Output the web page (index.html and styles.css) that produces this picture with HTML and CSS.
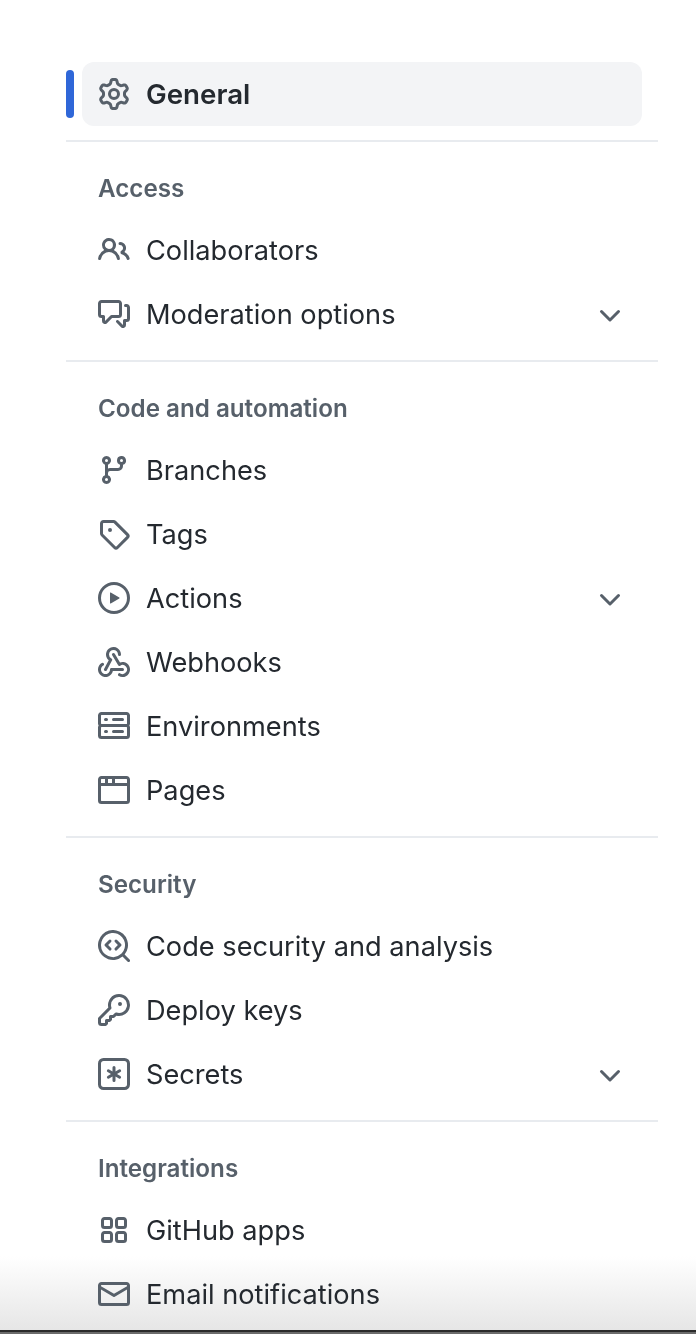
FILE: index.html
```html
<!DOCTYPE html>
<html lang="en">
<head>
<meta charset="utf-8">
<title>Settings</title>
<link rel="stylesheet" href="styles.css">
</head>
<body>
<nav class="nav">
  <a class="row active"><svg class="icon" viewBox="0 0 16 16"><path d="M8 0a8.2 8.2 0 0 1 .701.031C9.444.095 9.99.645 10.16 1.29l.288 1.107c.018.066.079.158.212.224.231.114.454.243.668.386.123.082.233.09.299.071l1.103-.303c.644-.176 1.392.021 1.82.63.27.385.506.792.704 1.218.315.675.111 1.422-.364 1.891l-.814.806c-.049.048-.098.147-.088.294.016.257.016.515 0 .772-.01.147.038.246.088.294l.814.806c.475.469.679 1.216.364 1.891a7.977 7.977 0 0 1-.704 1.217c-.428.61-1.176.807-1.82.63l-1.102-.302c-.067-.019-.177-.011-.3.071a5.909 5.909 0 0 1-.668.386c-.133.066-.194.158-.211.224l-.29 1.106c-.168.646-.715 1.196-1.458 1.26a8.006 8.006 0 0 1-1.402 0c-.743-.064-1.289-.614-1.458-1.26l-.289-1.106c-.018-.066-.079-.158-.212-.224a5.738 5.738 0 0 1-.668-.386c-.123-.082-.233-.09-.299-.071l-1.103.303c-.644.176-1.392-.021-1.82-.63a8.12 8.12 0 0 1-.704-1.218c-.315-.675-.111-1.422.363-1.891l.815-.806c.05-.048.098-.147.088-.294a6.214 6.214 0 0 1 0-.772c.01-.147-.038-.246-.088-.294l-.815-.806C.635 6.045.431 5.298.746 4.623a7.92 7.92 0 0 1 .704-1.217c.428-.61 1.176-.807 1.82-.63l1.102.302c.067.019.177.011.3-.071.214-.143.437-.272.668-.386.133-.066.194-.158.211-.224l.29-1.106C6.009.645 6.556.095 7.299.03 7.53.01 7.764 0 8 0Zm-.571 1.525c-.036.003-.108.036-.137.146l-.289 1.105c-.147.561-.549.967-.998 1.189-.173.086-.34.183-.5.29-.417.278-.97.423-1.529.27l-1.103-.303c-.109-.03-.175.016-.195.045-.22.312-.412.644-.573.99-.014.031-.021.11.059.19l.815.806c.411.406.562.957.53 1.456a4.709 4.709 0 0 0 0 .582c.032.499-.119 1.05-.53 1.456l-.815.806c-.081.08-.073.159-.059.19.162.346.353.677.573.989.02.03.085.076.195.046l1.102-.303c.56-.153 1.113-.008 1.53.27.161.107.328.204.501.29.447.222.85.629.997 1.189l.289 1.105c.029.109.101.143.137.146a6.6 6.6 0 0 0 1.142 0c.036-.003.108-.036.137-.146l.289-1.105c.147-.561.549-.967.998-1.189.173-.086.34-.183.5-.29.417-.278.97-.423 1.529-.27l1.103.303c.109.029.175-.016.195-.045.22-.313.411-.644.573-.99.014-.031.021-.11-.059-.19l-.815-.806c-.411-.406-.562-.957-.53-1.456a4.709 4.709 0 0 0 0-.582c-.032-.499.119-1.05.53-1.456l.815-.806c.081-.08.073-.159.059-.19a6.464 6.464 0 0 0-.573-.989c-.02-.03-.085-.076-.195-.046l-1.102.303c-.56.153-1.113.008-1.53-.27a4.44 4.44 0 0 0-.501-.29c-.447-.222-.85-.629-.997-1.189l-.289-1.105c-.029-.11-.101-.143-.137-.146a6.6 6.6 0 0 0-1.142 0ZM11 8a3 3 0 1 1-6 0 3 3 0 0 1 6 0ZM9.5 8a1.5 1.5 0 1 0-3.001.001A1.5 1.5 0 0 0 9.5 8Z"/></svg><span class="label">General</span></a>
  <div class="group">
    <h2 class="heading">Access</h2>
    <a class="row"><svg class="icon" viewBox="0 0 16 16"><path d="M2 5.5a3.5 3.5 0 1 1 5.898 2.549 5.508 5.508 0 0 1 3.034 4.084.75.75 0 1 1-1.482.235 4 4 0 0 0-7.9 0 .75.75 0 0 1-1.482-.236A5.507 5.507 0 0 1 3.102 8.05 3.493 3.493 0 0 1 2 5.5ZM11 4a3.001 3.001 0 0 1 2.22 5.018 5.01 5.01 0 0 1 2.56 3.012.749.749 0 0 1-.885.954.752.752 0 0 1-.549-.514 3.507 3.507 0 0 0-2.522-2.372.75.75 0 0 1-.574-.73v-.352a.75.75 0 0 1 .416-.672A1.5 1.5 0 0 0 11 5.5.75.75 0 0 1 11 4Zm-5.5-.5a2 2 0 1 0-.001 3.999A2 2 0 0 0 5.5 3.5Z"/></svg><span class="label">Collaborators</span></a>
    <a class="row"><svg class="icon" viewBox="0 0 16 16"><path d="M1.75 1h8.5c.966 0 1.75.784 1.75 1.75v5.5A1.75 1.75 0 0 1 10.25 10H7.061l-2.574 2.573A1.458 1.458 0 0 1 2 11.543V10h-.25A1.75 1.75 0 0 1 0 8.25v-5.5C0 1.784.784 1 1.75 1ZM1.5 2.75v5.5c0 .138.112.25.25.25h1a.75.75 0 0 1 .75.75v2.19l2.72-2.72a.749.749 0 0 1 .53-.22h3.5a.25.25 0 0 0 .25-.25v-5.5a.25.25 0 0 0-.25-.25h-8.5a.25.25 0 0 0-.25.25Zm13 2a.25.25 0 0 0-.25-.25h-.5a.75.75 0 0 1 0-1.5h.5c.966 0 1.75.784 1.75 1.75v5.5A1.75 1.75 0 0 1 14.25 12H14v1.543a1.458 1.458 0 0 1-2.487 1.03L9.22 12.28a.749.749 0 0 1 .326-1.275.749.749 0 0 1 .734.215l2.22 2.22v-2.19a.75.75 0 0 1 .75-.75h1a.25.25 0 0 0 .25-.25Z"/></svg><span class="label">Moderation options</span><svg class="chevron" viewBox="0 0 16 16"><path d="M12.78 5.22a.749.749 0 0 1 0 1.06l-4.25 4.25a.749.749 0 0 1-1.06 0L3.22 6.28a.749.749 0 1 1 1.06-1.06L8 8.939l3.72-3.719a.749.749 0 0 1 1.06 0Z"/></svg></a>
  </div>
  <div class="group">
    <h2 class="heading">Code and automation</h2>
    <a class="row"><svg class="icon" viewBox="0 0 16 16"><path d="M9.5 3.25a2.25 2.25 0 1 1 3 2.122V6A2.5 2.5 0 0 1 10 8.5H6a1 1 0 0 0-1 1v1.128a2.251 2.251 0 1 1-1.5 0V5.372a2.25 2.25 0 1 1 1.5 0v1.836A2.493 2.493 0 0 1 6 7h4a1 1 0 0 0 1-1v-.628A2.25 2.25 0 0 1 9.5 3.25Zm-6 0a.75.75 0 1 0 1.5 0 .75.75 0 0 0-1.5 0Zm8.25-.75a.75.75 0 1 0 0 1.5.75.75 0 0 0 0-1.5ZM4.25 12a.75.75 0 1 0 0 1.5.75.75 0 0 0 0-1.5Z"/></svg><span class="label">Branches</span></a>
    <a class="row"><svg class="icon" viewBox="0 0 16 16"><path d="M1 7.775V2.75C1 1.784 1.784 1 2.75 1h5.025c.464 0 .91.184 1.238.513l6.25 6.25a1.75 1.75 0 0 1 0 2.474l-5.026 5.026a1.75 1.75 0 0 1-2.474 0l-6.25-6.25A1.752 1.752 0 0 1 1 7.775Zm1.5 0c0 .066.026.13.073.177l6.25 6.25a.25.25 0 0 0 .354 0l5.025-5.025a.25.25 0 0 0 0-.354l-6.25-6.25a.25.25 0 0 0-.177-.073H2.75a.25.25 0 0 0-.25.25ZM6 5a1 1 0 1 1 0 2 1 1 0 0 1 0-2Z"/></svg><span class="label">Tags</span></a>
    <a class="row"><svg class="icon" viewBox="0 0 16 16"><path d="M8 0a8 8 0 1 1 0 16A8 8 0 0 1 8 0ZM1.5 8a6.5 6.5 0 1 0 13 0 6.5 6.5 0 0 0-13 0Zm4.879-2.773 4.264 2.559a.25.25 0 0 1 0 .428l-4.264 2.559A.25.25 0 0 1 6 10.559V5.442a.25.25 0 0 1 .379-.215Z"/></svg><span class="label">Actions</span><svg class="chevron" viewBox="0 0 16 16"><path d="M12.78 5.22a.749.749 0 0 1 0 1.06l-4.25 4.25a.749.749 0 0 1-1.06 0L3.22 6.28a.749.749 0 1 1 1.06-1.06L8 8.939l3.72-3.719a.749.749 0 0 1 1.06 0Z"/></svg></a>
    <a class="row"><svg class="icon" viewBox="0 0 16 16"><path d="M5.5 4.25a2.25 2.25 0 0 1 4.5 0 .75.75 0 0 0 1.5 0 3.75 3.75 0 1 0-6.14 2.889l-2.272 4.258a.75.75 0 0 0 1.324.706L7 7.25a.75.75 0 0 0-.309-1.015A2.25 2.25 0 0 1 5.5 4.25Z"/><path d="M7.364 3.607a.75.75 0 0 1 1.03.257l2.608 4.349a3.75 3.75 0 1 1-.628 6.785.75.75 0 0 1 .752-1.299 2.25 2.25 0 1 0-.033-3.88.75.75 0 0 1-1.03-.256L7.107 4.636a.75.75 0 0 1 .257-1.03Z"/><path d="M2.9 8.776A.75.75 0 0 1 2.625 9.8 2.25 2.25 0 1 0 6 11.75a.75.75 0 0 1 .75-.751h5.5a.75.75 0 0 1 0 1.5H7.425a3.751 3.751 0 1 1-5.55-3.998.75.75 0 0 1 1.024.274Z"/></svg><span class="label">Webhooks</span></a>
    <a class="row"><svg class="icon" viewBox="0 0 16 16"><path d="M1.75 1h12.5c.966 0 1.75.784 1.75 1.75v4c0 .372-.116.717-.314 1 .198.283.314.628.314 1v4a1.75 1.75 0 0 1-1.75 1.75H1.75A1.75 1.75 0 0 1 0 12.75v-4c0-.358.109-.707.314-1A1.739 1.739 0 0 1 0 6.75v-4C0 1.784.784 1 1.75 1ZM1.5 2.75v4c0 .138.112.25.25.25h12.5a.25.25 0 0 0 .25-.25v-4a.25.25 0 0 0-.25-.25H1.75a.25.25 0 0 0-.25.25Zm.25 5.75a.25.25 0 0 0-.25.25v4c0 .138.112.25.25.25h12.5a.25.25 0 0 0 .25-.25v-4a.25.25 0 0 0-.25-.25ZM7 4.75A.75.75 0 0 1 7.75 4h4.5a.75.75 0 0 1 0 1.5h-4.5A.75.75 0 0 1 7 4.75ZM7.75 10h4.5a.75.75 0 0 1 0 1.5h-4.5a.75.75 0 0 1 0-1.5ZM3 4.75A.75.75 0 0 1 3.75 4h.5a.75.75 0 0 1 0 1.5h-.5A.75.75 0 0 1 3 4.75ZM3.75 10h.5a.75.75 0 0 1 0 1.5h-.5a.75.75 0 0 1 0-1.5Z"/></svg><span class="label">Environments</span></a>
    <a class="row"><svg class="icon" viewBox="0 0 16 16"><path d="M0 2.75C0 1.784.784 1 1.75 1h12.5c.966 0 1.75.784 1.75 1.75v10.5A1.75 1.75 0 0 1 14.25 15H1.75A1.75 1.75 0 0 1 0 13.25ZM14.5 6h-13v7.25c0 .138.112.25.25.25h12.5a.25.25 0 0 0 .25-.25Zm-6-3.5v2H14.5V2.75a.25.25 0 0 0-.25-.25ZM5 2.5v2h2v-2Zm-3.25 0a.25.25 0 0 0-.25.25V4.5h2v-2Z"/></svg><span class="label">Pages</span></a>
  </div>
  <div class="group">
    <h2 class="heading">Security</h2>
    <a class="row"><svg class="icon" viewBox="0 0 16 16"><path d="M8.47 4.97a.75.75 0 0 0 0 1.06L9.94 7.5 8.47 8.97a.75.75 0 1 0 1.06 1.06l2-2a.75.75 0 0 0 0-1.06l-2-2a.75.75 0 0 0-1.06 0ZM6.53 6.03a.75.75 0 0 0-1.06-1.06l-2 2a.75.75 0 0 0 0 1.06l2 2a.75.75 0 1 0 1.06-1.06L5.06 7.5l1.47-1.47Z"/><path d="M12.246 13.307a7.501 7.501 0 1 1 1.06-1.06l2.474 2.473a.749.749 0 0 1-.326 1.275.749.749 0 0 1-.734-.215ZM1.5 7.5a6.002 6.002 0 0 0 3.608 5.504 6.002 6.002 0 0 0 6.486-1.117.748.748 0 0 1 .292-.293A6 6 0 1 0 1.5 7.5Z"/></svg><span class="label">Code security and analysis</span></a>
    <a class="row"><svg class="icon" viewBox="0 0 16 16"><path d="M10.5 0a5.499 5.499 0 1 1-1.288 10.848l-.932.932a.749.749 0 0 1-.53.22H7v.75a.749.749 0 0 1-.22.53l-.5.5a.749.749 0 0 1-.53.22H5v.75a.749.749 0 0 1-.22.53l-.5.5a.749.749 0 0 1-.53.22h-2A1.75 1.75 0 0 1 0 14.25v-2c0-.199.079-.389.22-.53l4.932-4.932A5.5 5.5 0 0 1 10.5 0Zm-4 5.5c-.001.431.069.86.205 1.269a.75.75 0 0 1-.181.768L1.5 12.56v1.69c0 .138.112.25.25.25h1.69l.06-.06v-1.19a.75.75 0 0 1 .75-.75h1.19l.06-.06v-1.19a.75.75 0 0 1 .75-.75h1.19l1.023-1.025a.75.75 0 0 1 .768-.18A4 4 0 1 0 6.5 5.5ZM11 6a1 1 0 1 1 0-2 1 1 0 0 1 0 2Z"/></svg><span class="label">Deploy keys</span></a>
    <a class="row"><svg class="icon" viewBox="0 0 16 16"><path d="M0 2.75A2.75 2.75 0 0 1 2.75 0h10.5A2.75 2.75 0 0 1 16 2.75v10.5A2.75 2.75 0 0 1 13.25 16H2.75A2.75 2.75 0 0 1 0 13.25ZM2.75 1.5c-.69 0-1.25.56-1.25 1.25v10.5c0 .69.56 1.25 1.25 1.25h10.5c.69 0 1.25-.56 1.25-1.25V2.75c0-.69-.56-1.25-1.25-1.25Z"/><path d="M8 4a.75.75 0 0 1 .75.75V6.7l1.69-.975a.75.75 0 0 1 .75 1.3L9.5 8l1.69.976a.75.75 0 0 1-.75 1.298L8.75 9.3v1.951a.75.75 0 0 1-1.5 0V9.299l-1.69.976a.75.75 0 0 1-.75-1.3L6.5 8l-1.69-.975a.75.75 0 0 1 .75-1.3l1.69.976V4.75A.75.75 0 0 1 8 4Z"/></svg><span class="label">Secrets</span><svg class="chevron" viewBox="0 0 16 16"><path d="M12.78 5.22a.749.749 0 0 1 0 1.06l-4.25 4.25a.749.749 0 0 1-1.06 0L3.22 6.28a.749.749 0 1 1 1.06-1.06L8 8.939l3.72-3.719a.749.749 0 0 1 1.06 0Z"/></svg></a>
  </div>
  <div class="group">
    <h2 class="heading">Integrations</h2>
    <a class="row"><svg class="icon" viewBox="0 0 16 16"><path d="M1.5 3.25c0-.966.784-1.75 1.75-1.75h2.5c.966 0 1.75.784 1.75 1.75v2.5A1.75 1.75 0 0 1 5.75 7.5h-2.5A1.75 1.75 0 0 1 1.5 5.75Zm7 0c0-.966.784-1.75 1.75-1.75h2.5c.966 0 1.75.784 1.75 1.75v2.5a1.75 1.75 0 0 1-1.75 1.75h-2.5A1.75 1.75 0 0 1 8.5 5.75Zm-7 7c0-.966.784-1.75 1.75-1.75h2.5c.966 0 1.75.784 1.75 1.75v2.5a1.75 1.75 0 0 1-1.75 1.75h-2.5a1.75 1.75 0 0 1-1.75-1.75Zm7 0c0-.966.784-1.75 1.75-1.75h2.5c.966 0 1.75.784 1.75 1.75v2.5a1.75 1.75 0 0 1-1.75 1.75h-2.5a1.75 1.75 0 0 1-1.75-1.75ZM3.25 3a.25.25 0 0 0-.25.25v2.5c0 .138.112.25.25.25h2.5A.25.25 0 0 0 6 5.75v-2.5A.25.25 0 0 0 5.75 3Zm7 0a.25.25 0 0 0-.25.25v2.5c0 .138.112.25.25.25h2.5a.25.25 0 0 0 .25-.25v-2.5a.25.25 0 0 0-.25-.25Zm-7 7a.25.25 0 0 0-.25.25v2.5c0 .138.112.25.25.25h2.5a.25.25 0 0 0 .25-.25v-2.5a.25.25 0 0 0-.25-.25Zm7 0a.25.25 0 0 0-.25.25v2.5c0 .138.112.25.25.25h2.5a.25.25 0 0 0 .25-.25v-2.5a.25.25 0 0 0-.25-.25Z"/></svg><span class="label">GitHub apps</span></a>
    <a class="row"><svg class="icon" viewBox="0 0 16 16"><path d="M1.75 2h12.5c.966 0 1.75.784 1.75 1.75v8.5A1.75 1.75 0 0 1 14.25 14H1.75A1.75 1.75 0 0 1 0 12.25v-8.5C0 2.784.784 2 1.75 2ZM1.5 12.251c0 .138.112.25.25.25h12.5a.25.25 0 0 0 .25-.25V5.809L8.38 9.397a.75.75 0 0 1-.76 0L1.5 5.809v6.442Zm13-8.181v-.32a.25.25 0 0 0-.25-.25H1.75a.25.25 0 0 0-.25.25v.32L8 7.88Z"/></svg><span class="label">Email notifications</span></a>
  </div>
</nav>
<div class="edge"></div>
</body>
</html>
```
FILE: styles.css
```css
html, body {
  margin: 0;
  height: 100%;
  overflow: hidden;
  background: #fff;
}
body {
  font-family: Inter, "Liberation Sans", sans-serif;
  color: #24292f;
}
.nav {
  position: relative;
  z-index: 1;
  width: 592px;
  margin-left: 66px;
  padding-top: 62px;
}
.row {
  display: flex;
  align-items: center;
  gap: 16px;
  height: 64px;
  margin: 0 16px;
  padding: 0 16px;
  border-radius: 12px;
  position: relative;
}
.label {
  flex: 1;
  padding-top: 2px;
  font-size: 27.2px;
  line-height: 40px;
}
.active {
  background: #f3f4f6;
}
.active .label {
  padding-top: 0;
  font-size: 27.7px;
  font-weight: 600;
}
.active::before {
  content: "";
  position: absolute;
  left: -16px;
  top: 8px;
  width: 8px;
  height: 48px;
  border-radius: 4px;
  background: #2f67d8;
}
.icon {
  width: 32px;
  height: 32px;
  flex: none;
  fill: #57606a;
}
.chevron {
  width: 32px;
  height: 32px;
  flex: none;
  margin-top: 4px;
  fill: #57606a;
}
.group {
  margin-top: 14px;
  border-top: 2px solid #e8ebef;
}
.group .row:last-child {
  margin-bottom: 14px;
}
.heading {
  margin: 0;
  padding: 31px 32px 13px;
  font-size: 24.2px;
  line-height: 32px;
  font-weight: 600;
  color: #57606a;
}
.edge {
  position: fixed;
  left: 0;
  right: 0;
  bottom: 0;
  height: 78px;
  background: linear-gradient(to bottom, #fff 0, #e6e6e6 74px);
}
.edge::after {
  content: "";
  position: absolute;
  left: 0;
  right: 0;
  bottom: 0;
  height: 4px;
  background: linear-gradient(#2a2a2a 0 2px, #6b6b6b 2px);
}
```
